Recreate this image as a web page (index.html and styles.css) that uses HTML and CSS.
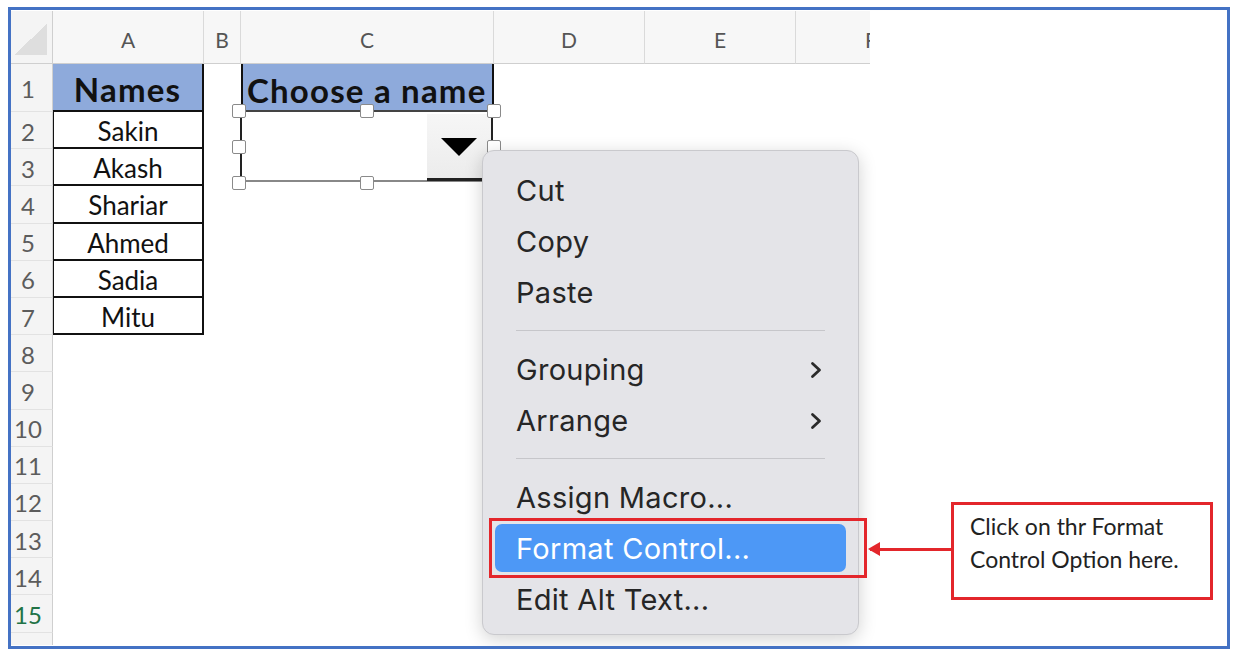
FILE: index.html
```html
<!DOCTYPE html>
<html lang="en">
<head>
    <meta charset="UTF-8">
    <title>Format Control - Combo Box</title>
    <link rel="stylesheet" href="styles.css">
</head>
<body>
    <div class="frame">
        <div class="sheet">
            <div class="corner"></div>
            <div class="col-head">A</div>
            <div class="col-head">B</div>
            <div class="col-head">C</div>
            <div class="col-head">D</div>
            <div class="col-head">E</div>
            <div class="col-head">F</div>

            <div class="row-head">1</div>
            <div class="cell names-head">Names</div>
            <div class="cell"></div>
            <div class="cell choose-head">Choose a name</div>
            <div class="cell"></div><div class="cell"></div><div class="cell"></div>

            <div class="row-head">2</div>
            <div class="cell name">Sakin</div>
            <div class="cell"></div><div class="cell"></div><div class="cell"></div><div class="cell"></div><div class="cell"></div>

            <div class="row-head">3</div>
            <div class="cell name">Akash</div>
            <div class="cell"></div><div class="cell"></div><div class="cell"></div><div class="cell"></div><div class="cell"></div>

            <div class="row-head">4</div>
            <div class="cell name">Shariar</div>
            <div class="cell"></div><div class="cell"></div><div class="cell"></div><div class="cell"></div><div class="cell"></div>

            <div class="row-head">5</div>
            <div class="cell name">Ahmed</div>
            <div class="cell"></div><div class="cell"></div><div class="cell"></div><div class="cell"></div><div class="cell"></div>

            <div class="row-head">6</div>
            <div class="cell name">Sadia</div>
            <div class="cell"></div><div class="cell"></div><div class="cell"></div><div class="cell"></div><div class="cell"></div>

            <div class="row-head">7</div>
            <div class="cell name">Mitu</div>
            <div class="cell"></div><div class="cell"></div><div class="cell"></div><div class="cell"></div><div class="cell"></div>

            <div class="row-head">8</div><div class="cell blank"></div>
            <div class="row-head">9</div><div class="cell blank"></div>
            <div class="row-head">10</div><div class="cell blank"></div>
            <div class="row-head">11</div><div class="cell blank"></div>
            <div class="row-head">12</div><div class="cell blank"></div>
            <div class="row-head">13</div><div class="cell blank"></div>
            <div class="row-head">14</div><div class="cell blank"></div>
            <div class="row-head active">15</div><div class="cell blank"></div>
            <div class="row-head"></div><div class="cell blank"></div>
        </div>

        <!-- combo box with its selection handles -->
        <div class="combo">
            <div class="combo-btn"><span class="tri"></span></div>
        </div>
        <span class="handle h1"></span>
        <span class="handle h2"></span>
        <span class="handle h3"></span>
        <span class="handle h4"></span>
        <span class="handle h5"></span>
        <span class="handle h6"></span>
        <span class="handle h7"></span>

        <div class="menu">
            <div class="item">Cut</div>
            <div class="item">Copy</div>
            <div class="item">Paste</div>
            <div class="sep"></div>
            <div class="item">Grouping
                <svg class="chev" viewBox="0 0 12 18" width="12" height="18"><polyline points="2.5,2.5 9.5,9 2.5,15.5" fill="none" stroke="#2a2a2a" stroke-width="2.8" stroke-linecap="round" stroke-linejoin="round"/></svg>
            </div>
            <div class="item">Arrange
                <svg class="chev" viewBox="0 0 12 18" width="12" height="18"><polyline points="2.5,2.5 9.5,9 2.5,15.5" fill="none" stroke="#2a2a2a" stroke-width="2.8" stroke-linecap="round" stroke-linejoin="round"/></svg>
            </div>
            <div class="sep"></div>
            <div class="item">Assign Macro...</div>
            <div class="item selected">Format Control...</div>
            <div class="item">Edit Alt Text...</div>
        </div>

        <!-- annotation -->
        <div class="mark"></div>
        <div class="arrow"></div>
        <div class="callout">Click on thr Format<br>Control Option here.</div>
    </div>
</body>
</html>
```

FILE: styles.css
```css
body {
    margin: 0;
    background: #fff;
}
.frame {
    position: relative;
    box-sizing: border-box;
    width: 1222px;
    height: 642px;
    margin: 7px 0 0 8px;
    border: 3px solid #4472c4;
    overflow: hidden;
}
.sheet {
    display: grid;
    grid-template-columns: 42px 151px 37px 253px 151px 151px 151px;
    grid-template-rows: 53px 48px repeat(15, 37.2px);
    width: 859px;
    height: 634px;
    margin-top: 1px;
    overflow: hidden;
    font-family: Lato, "Liberation Sans", sans-serif;
}
.corner {
    position: relative;
    background: #f4f4f4;
    border-right: 1px solid #cfcfcf;
    border-bottom: 1px solid #cfcfcf;
}
.corner::after {
    content: "";
    position: absolute;
    right: 5px;
    bottom: 8px;
    width: 33px;
    height: 31px;
    background: linear-gradient(to bottom right, transparent 50%, #dedede 50%);
}
.col-head {
    display: flex;
    align-items: center;
    justify-content: center;
    background: #f7f7f7;
    border-right: 1px solid #dadada;
    border-bottom: 1px solid #cfcfcf;
    color: #555;
    font-size: 21px;
    padding-top: 5px;
}
.row-head {
    display: flex;
    align-items: center;
    justify-content: center;
    padding: 2px 7px 0 0;
    background: #f4f4f4;
    border-right: 1px solid #cfcfcf;
    border-bottom: 1px solid #e2e2e2;
    color: #5c5c5c;
    font-size: 24px;
}
.row-head.active {
    color: #217346;
}
.cell {
    display: flex;
    align-items: center;
    justify-content: center;
    color: #111;
}
.blank {
    grid-column: span 6;
}
.names-head {
    padding-top: 3px;
    background: #8eaadb;
    border-right: 2px solid #111;
    border-bottom: 2px solid #111;
    font-size: 33px;
    font-weight: 700;
    letter-spacing: 1.2px;
}
.choose-head {
    justify-content: flex-start;
    padding: 3px 0 0 4px;
    background: #8eaadb;
    border-left: 2px solid #111;
    border-right: 2px solid #111;
    font-size: 33px;
    font-weight: 700;
    letter-spacing: 1.2px;
    white-space: nowrap;
}
.name {
    padding-top: 3px;
    border-left: 1px solid #111;
    border-right: 2px solid #111;
    border-bottom: 2px solid #111;
    font-size: 26px;
}

.combo {
    position: absolute;
    left: 229px;
    top: 100px;
    width: 253px;
    height: 72px;
    box-sizing: border-box;
    border-top: 2px solid #444;
    border-left: 2px solid #222;
    border-right: 2px solid #222;
    border-bottom: 2px solid #888;
    background: #fff;
}
.combo-btn {
    position: absolute;
    right: 0;
    top: 2px;
    width: 64px;
    height: 64px;
    display: flex;
    align-items: center;
    justify-content: center;
    background: linear-gradient(#f6f6f6, #ececec);
    border-bottom: 3px solid #222;
}
.tri {
    width: 0;
    height: 0;
    border-left: 18px solid transparent;
    border-right: 18px solid transparent;
    border-top: 18px solid #000;
    margin-top: 2px;
}
.handle {
    position: absolute;
    width: 14px;
    height: 14px;
    box-sizing: border-box;
    background: #fff;
    border: 1px solid #8a8a8a;
    border-radius: 2px;
}
.h1 { left: 221px; top: 94px; }
.h2 { left: 349px; top: 94px; }
.h3 { left: 476px; top: 94px; }
.h4 { left: 221px; top: 130px; }
.h5 { left: 476px; top: 130px; }
.h6 { left: 221px; top: 166px; }
.h7 { left: 349px; top: 166px; }

.menu {
    position: absolute;
    left: 471px;
    top: 140px;
    width: 377px;
    height: 485px;
    box-sizing: border-box;
    padding: 14px 0 0;
    background: #e4e4e8;
    border: 1px solid #c9c9cd;
    border-radius: 12px;
    box-shadow: 0 4px 18px rgba(0, 0, 0, 0.18);
    font-family: Inter, "Liberation Sans", sans-serif;
    font-size: 29px;
    letter-spacing: 0.3px;
    color: #262626;
}
.item {
    display: flex;
    align-items: center;
    justify-content: space-between;
    height: 51px;
    margin: 0 12px;
    padding: 0 24px 0 21px;
    border-radius: 7px;
}
.item.selected {
    height: 48px;
    margin: 1px 12px 2px;
    background: #4d98f6;
    color: #fff;
}
.sep {
    height: 1px;
    margin: 12px 33px 13px;
    background: #c6c6ca;
}

.mark {
    position: absolute;
    left: 478px;
    top: 508px;
    width: 378px;
    height: 60px;
    box-sizing: border-box;
    border: 3px solid #e3262b;
}
.arrow {
    position: absolute;
    left: 859px;
    top: 538px;
    width: 82px;
    height: 3px;
    background: #e3262b;
}
.arrow::before {
    content: "";
    position: absolute;
    left: -2px;
    top: -6px;
    border-top: 7px solid transparent;
    border-bottom: 7px solid transparent;
    border-right: 12px solid #e3262b;
}
.callout {
    position: absolute;
    left: 940px;
    top: 492px;
    width: 262px;
    height: 98px;
    box-sizing: border-box;
    padding: 5px 0 0 16px;
    border: 3px solid #e3262b;
    background: #fff;
    font-family: Lato, "Liberation Sans", sans-serif;
    font-size: 23px;
    line-height: 33px;
    color: #222;
}
```
